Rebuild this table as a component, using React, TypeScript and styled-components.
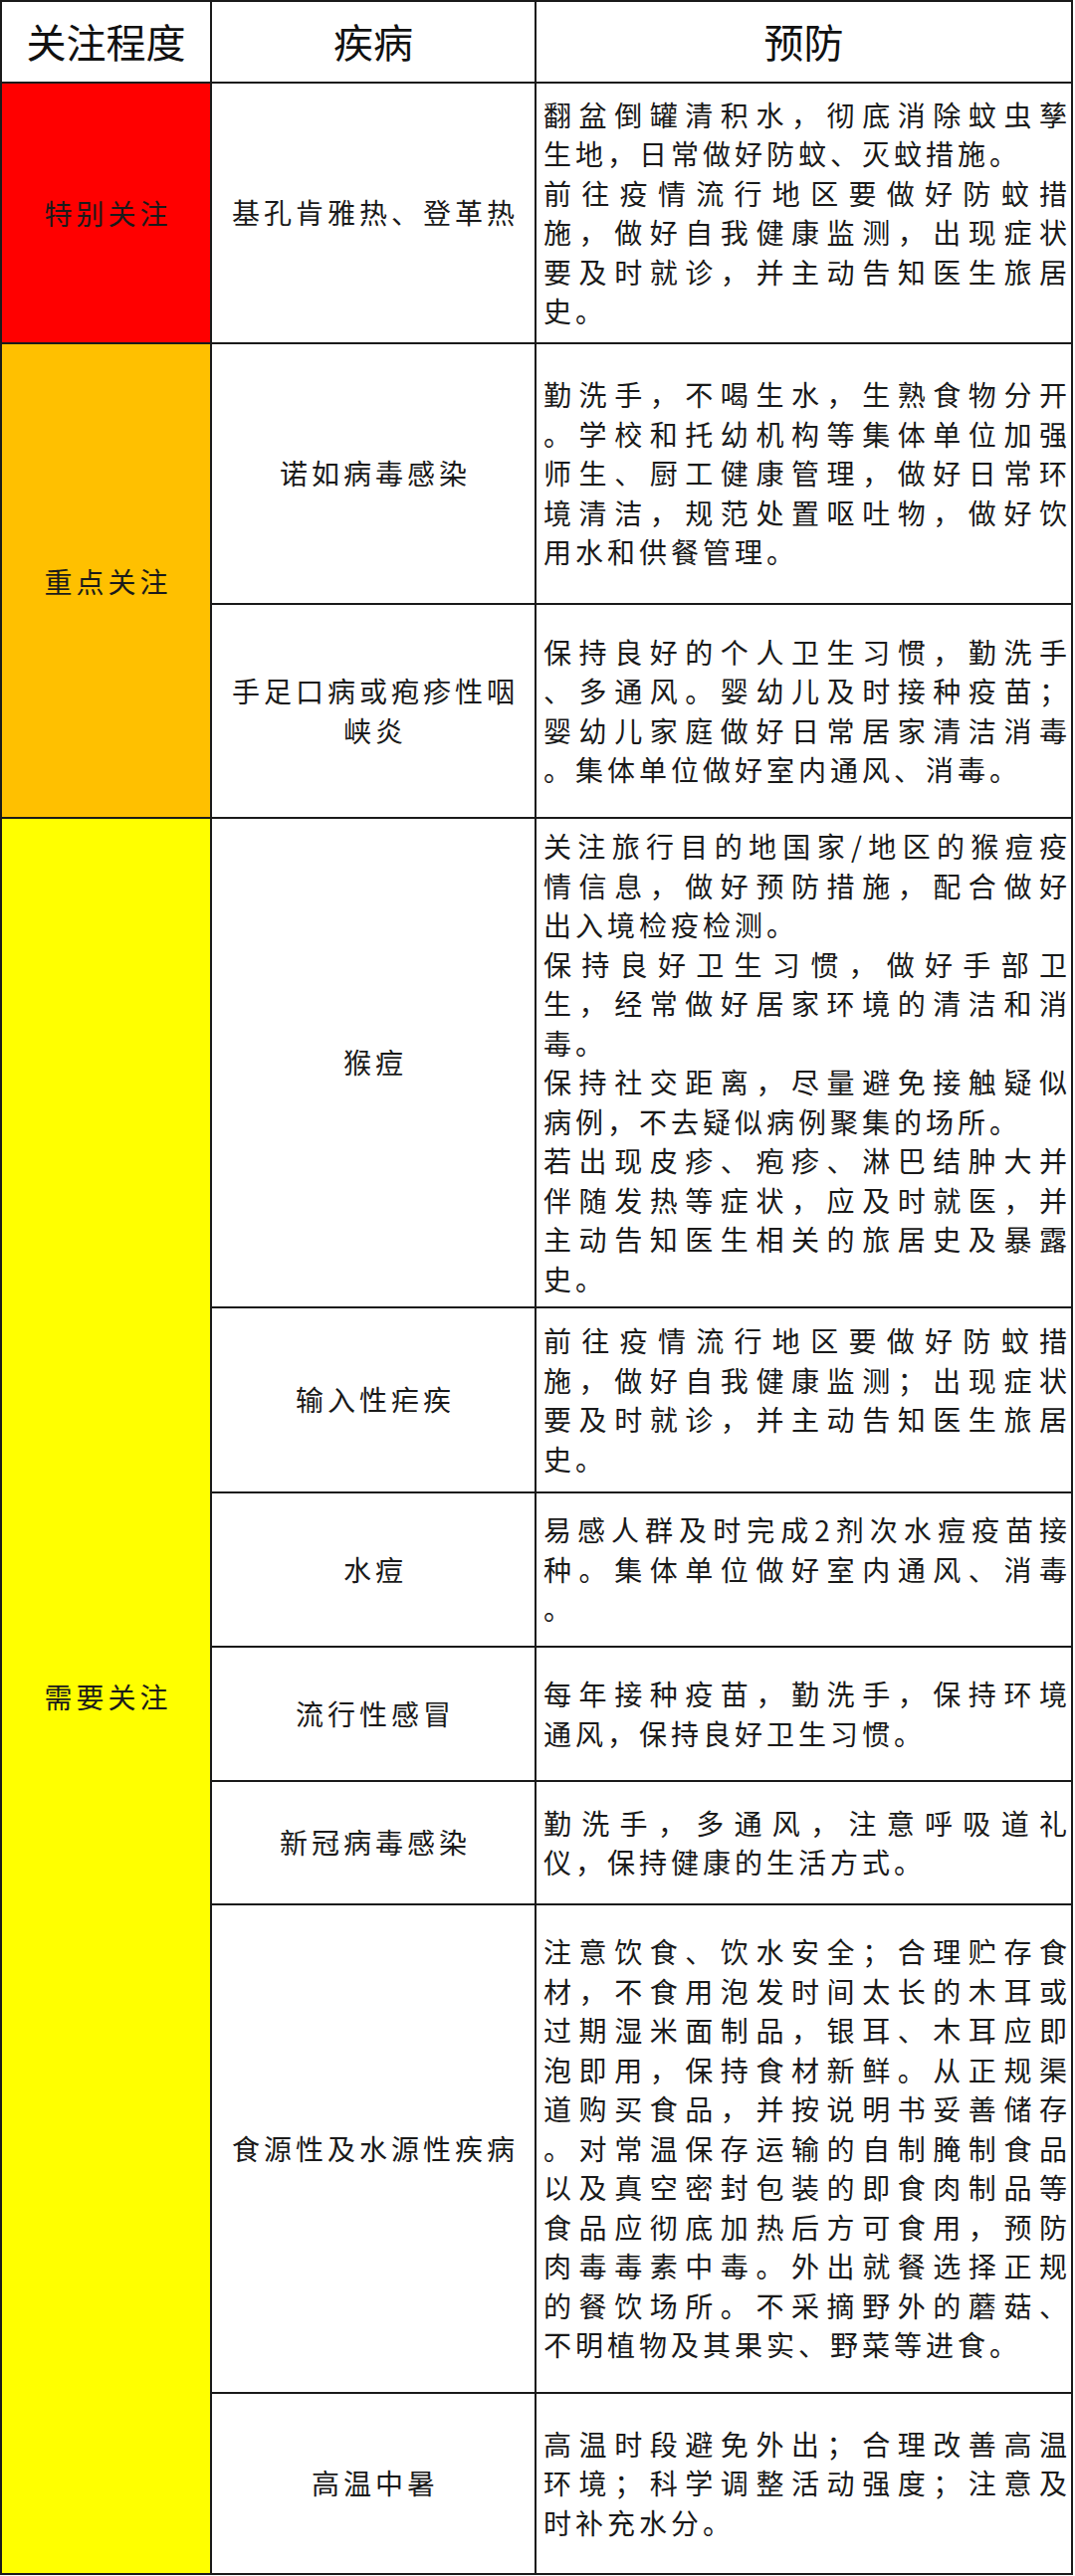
import React from 'react';
import styled, { createGlobalStyle } from 'styled-components';

const GlobalStyle = createGlobalStyle`
  html, body {
    margin: 0;
    padding: 0;
    background: #fff;
  }
  body {
    font-family: "Noto Sans CJK SC", "Noto Sans", sans-serif;
    color: #1a1a1a;
  }
`;

type Disease = {
  name: string;
  height: number;
  // each entry is one printed line; "|" marks the last line of a paragraph
  lines: string[];
};

type Level = {
  label: string;
  color: string;
  diseases: Disease[];
};

const levels: Level[] = [
  {
    label: '特别关注',
    color: '#ff0000',
    diseases: [
      {
        name: '基孔肯雅热、登革热',
        height: 260,
        lines: [
          '翻盆倒罐清积水，彻底消除蚊虫孳',
          '|生地，日常做好防蚊、灭蚊措施。',
          '前往疫情流行地区要做好防蚊措',
          '施，做好自我健康监测，出现症状',
          '要及时就诊，并主动告知医生旅居',
          '|史。',
        ],
      },
    ],
  },
  {
    label: '重点关注',
    color: '#ffc000',
    diseases: [
      {
        name: '诺如病毒感染',
        height: 260,
        lines: [
          '勤洗手，不喝生水，生熟食物分开',
          '。学校和托幼机构等集体单位加强',
          '师生、厨工健康管理，做好日常环',
          '境清洁，规范处置呕吐物，做好饮',
          '|用水和供餐管理。',
        ],
      },
      {
        name: '手足口病或疱疹性咽峡炎',
        height: 213,
        lines: [
          '保持良好的个人卫生习惯，勤洗手',
          '、多通风。婴幼儿及时接种疫苗；',
          '婴幼儿家庭做好日常居家清洁消毒',
          '|。集体单位做好室内通风、消毒。',
        ],
      },
    ],
  },
  {
    label: '需要关注',
    color: '#ffff00',
    diseases: [
      {
        name: '猴痘',
        height: 490,
        lines: [
          '关注旅行目的地国家/地区的猴痘疫',
          '情信息，做好预防措施，配合做好',
          '|出入境检疫检测。',
          '保持良好卫生习惯，做好手部卫',
          '生，经常做好居家环境的清洁和消',
          '|毒。',
          '保持社交距离，尽量避免接触疑似',
          '|病例，不去疑似病例聚集的场所。',
          '若出现皮疹、疱疹、淋巴结肿大并',
          '伴随发热等症状，应及时就医，并',
          '主动告知医生相关的旅居史及暴露',
          '|史。',
        ],
      },
      {
        name: '输入性疟疾',
        height: 184,
        lines: [
          '前往疫情流行地区要做好防蚊措',
          '施，做好自我健康监测；出现症状',
          '要及时就诊，并主动告知医生旅居',
          '|史。',
        ],
      },
      {
        name: '水痘',
        height: 153,
        lines: [
          '易感人群及时完成2剂次水痘疫苗接',
          '种。集体单位做好室内通风、消毒',
          '|。',
        ],
      },
      {
        name: '流行性感冒',
        height: 133,
        lines: ['每年接种疫苗，勤洗手，保持环境', '|通风，保持良好卫生习惯。'],
      },
      {
        name: '新冠病毒感染',
        height: 122,
        lines: ['勤洗手，多通风，注意呼吸道礼', '|仪，保持健康的生活方式。'],
      },
      {
        name: '食源性及水源性疾病',
        height: 489,
        lines: [
          '注意饮食、饮水安全；合理贮存食',
          '材，不食用泡发时间太长的木耳或',
          '过期湿米面制品，银耳、木耳应即',
          '泡即用，保持食材新鲜。从正规渠',
          '道购买食品，并按说明书妥善储存',
          '。对常温保存运输的自制腌制食品',
          '以及真空密封包装的即食肉制品等',
          '食品应彻底加热后方可食用，预防',
          '肉毒毒素中毒。外出就餐选择正规',
          '的餐饮场所。不采摘野外的蘑菇、',
          '|不明植物及其果实、野菜等进食。',
        ],
      },
      {
        name: '高温中暑',
        height: 180,
        lines: [
          '高温时段避免外出；合理改善高温',
          '环境；科学调整活动强度；注意及',
          '|时补充水分。',
        ],
      },
    ],
  },
];

const HEADER_HEIGHT = 80;

const Table = styled.div<{ $rows: string }>`
  width: 1078px;
  box-sizing: border-box;
  display: grid;
  grid-template-columns: 209px 324px 1fr;
  grid-template-rows: ${(p) => p.$rows};
  gap: 2px;
  padding: 2px;
  background: #1a1a1a;
`;

const HeadCell = styled.div`
  background: #fff;
  display: flex;
  align-items: center;
  justify-content: center;
  font-size: 40px;
  font-weight: 400;
  color: #111;
  padding-bottom: 2px;
`;

const LevelCell = styled.div<{ $span: number; $color: string }>`
  grid-column: 1;
  grid-row: span ${(p) => p.$span};
  background: ${(p) => p.$color};
  display: flex;
  align-items: center;
  justify-content: center;
  font-size: 28px;
  letter-spacing: 4px;
  padding-left: 4px;
`;

const DiseaseCell = styled.div`
  grid-column: 2;
  background: #fff;
  display: flex;
  align-items: center;
  justify-content: center;
  text-align: center;
  padding: 0 8px 0 12px;
  font-size: 28px;
  line-height: 39.5px;
  letter-spacing: 4px;
`;

const PreventCell = styled.div`
  grid-column: 3;
  background: #fff;
  display: flex;
  flex-direction: column;
  justify-content: center;
  padding: 0 0 0 7px;
  font-size: 28px;
  line-height: 39.5px;
  letter-spacing: 4px;
`;

const Line = styled.div<{ $justify: boolean }>`
  white-space: nowrap;
  text-align: ${(p) => (p.$justify ? 'justify' : 'left')};
  text-align-last: ${(p) => (p.$justify ? 'justify' : 'auto')};
`;

export default function App() {
  const heights = [HEADER_HEIGHT];
  levels.forEach((l) => l.diseases.forEach((d) => heights.push(d.height)));
  const rows = heights.map((h) => `${h}px`).join(' ');

  return (
    <>
      <GlobalStyle />
      <Table $rows={rows}>
        <HeadCell>关注程度</HeadCell>
        <HeadCell>疾病</HeadCell>
        <HeadCell>预防</HeadCell>
        {levels.map((level) => (
          <React.Fragment key={level.label}>
            <LevelCell $span={level.diseases.length} $color={level.color}>
              {level.label}
            </LevelCell>
            {level.diseases.map((d) => (
              <React.Fragment key={d.name}>
                <DiseaseCell>{d.name}</DiseaseCell>
                <PreventCell>
                  {d.lines.map((line, i) => {
                    const last = line.startsWith('|');
                    return (
                      <Line key={i} $justify={!last}>
                        {last ? line.slice(1) : line}
                      </Line>
                    );
                  })}
                </PreventCell>
              </React.Fragment>
            ))}
          </React.Fragment>
        ))}
      </Table>
    </>
  );
}
